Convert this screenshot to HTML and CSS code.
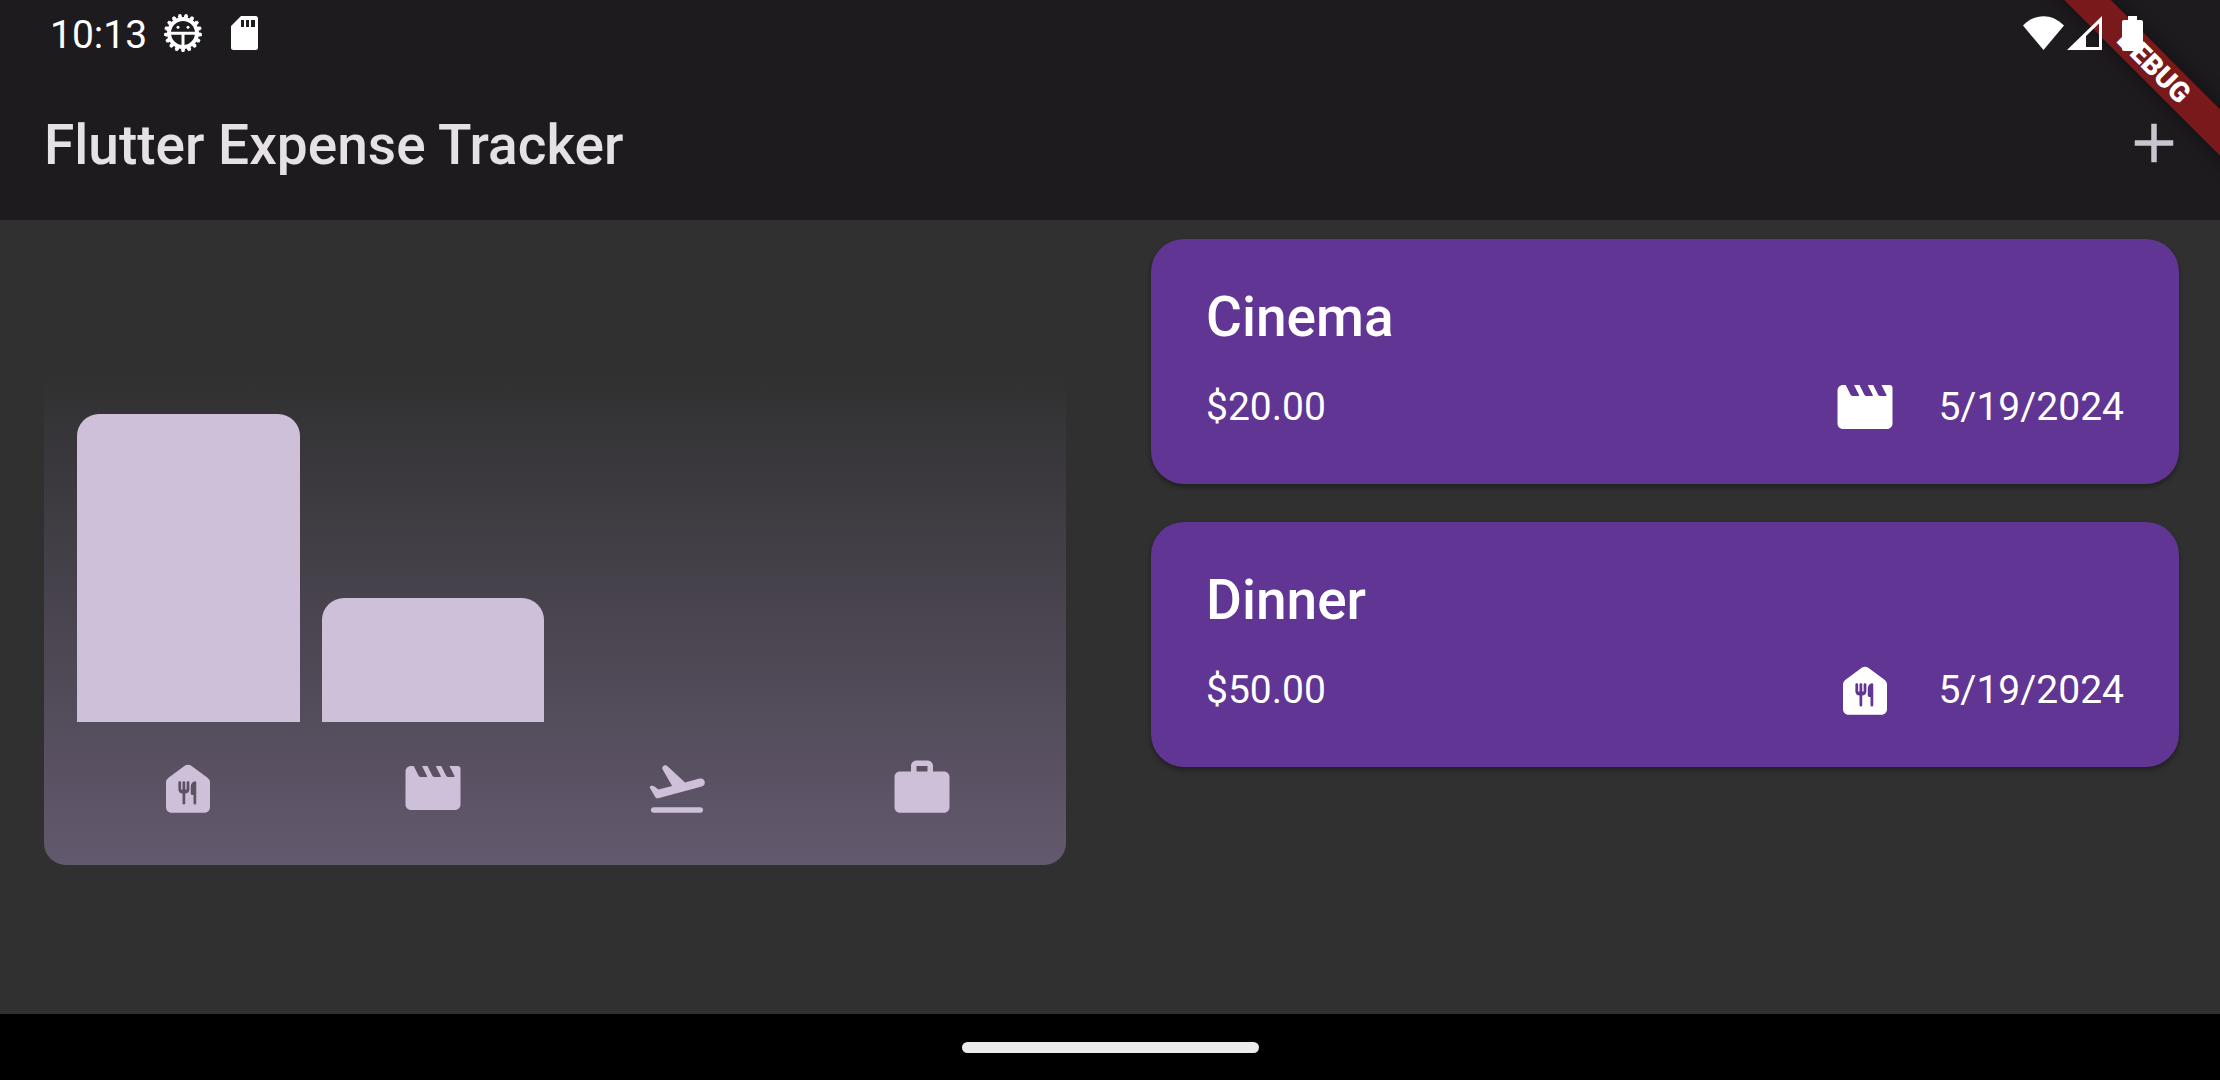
FILE: index.html
```html
<!DOCTYPE html>
<html lang="en">
<head>
  <meta charset="utf-8">
  <meta name="viewport" content="width=device-width, initial-scale=1">
  <title>Flutter Expense Tracker</title>
  <link rel="stylesheet" href="styles.css">
</head>
<body>
  <svg class="sprite" aria-hidden="true">
    <symbol id="food" viewBox="0 0 24 24">
      <path fill-rule="evenodd" d="M10.800 3.900c.71-.53 1.690-.53 2.400 0l6 4.500c.5.380.8.970.8 1.600v9c0 1.100-.9 2-2 2H6c-1.100 0-2-.9-2-2v-9c0-.630.300-1.220.8-1.600zM12.500 12.500V9.920a.42.420 0 0 0-.42-.42h-.16a.42.420 0 0 0-.42.420V12.500H11V9.920a.42.420 0 0 0-.42-.42h-.16a.42.420 0 0 0-.42.420V12.500h-.5V9.920a.42.420 0 0 0-.42-.42h-.16a.42.420 0 0 0-.42.420v2.580c0 .830.670 1.500 1.500 1.500v3.500a.5.500 0 0 0 1 0V14c.830 0 1.500-.67 1.500-1.500zM15 17.500V10c0-.33-.31-.57-.62-.47-.82.250-1.380 1.040-1.380 1.970v2.500c0 .280.220.5.500.5h.5v3a.5.500 0 0 0 1 0z"/>
    </symbol>
    <symbol id="movie" viewBox="0 0 24 24">
      <path d="M18 4l1.820 3.640c.08.160-.04.360-.22.360h-1.980c-.38 0-.73-.21-.89-.55L15 4h-2l1.820 3.640c.08.160-.04.360-.22.360h-1.980c-.38 0-.73-.21-.89-.55L10 4H8l1.820 3.640c.08.160-.04.360-.22.360H7.620c-.38 0-.73-.21-.9-.55L5 4H4c-1.100 0-1.990.9-1.990 2L2 18c0 1.100.9 2 2 2h16c1.100 0 2-.9 2-2V5c0-.55-.45-1-1-1h-3z"/>
    </symbol>
    <symbol id="travel" viewBox="0 0 24 24">
      <path d="M3.500 19h17c.55 0 1 .45 1 1s-.45 1-1 1h-17c-.55 0-1-.45-1-1s.45-1 1-1zM22.070 9.640c-.22-.8-1.040-1.270-1.840-1.060L14.920 10 8.460 3.980c-.27-.26-.66-.35-1.020-.25-.68.180-1 .960-.65 1.570l3.440 5.960-4.970 1.330-1.570-1.240c-.25-.19-.57-.26-.88-.18l-.33.090c-.32.080-.47.450-.3.730l1.880 3.250c.23.390.69.580 1.120.470L21 11.480c.8-.22 1.280-1.040 1.070-1.840z"/>
    </symbol>
    <symbol id="work" viewBox="0 0 24 24">
      <path d="M20 6h-4V4c0-1.110-.89-2-2-2h-4c-1.110 0-2 .89-2 2v2H4c-1.110 0-1.990.89-1.990 2L2 19c0 1.110.89 2 2 2h16c1.110 0 2-.89 2-2V8c0-1.110-.89-2-2-2zm-6 0h-4V4h4v2z"/>
    </symbol>
    <symbol id="plus" viewBox="0 0 24 24">
      <path d="M19 13h-6v6h-2v-6H5v-2h6V5h2v6h6v2z"/>
    </symbol>
  </svg>

  <div class="app">
    <header class="top">
      <div class="status">
        <span class="time">10:13</span>
        <svg class="gear" viewBox="0 0 38 38" aria-hidden="true">
          <g fill="none" stroke="#fff">
            <circle cx="19" cy="19" r="14" stroke-width="4"/>
            <circle cx="19" cy="19" r="16.600" stroke-width="2.400" pathLength="17" stroke-dasharray=".64 .36" transform="rotate(83.200 19 19)"/>
            <circle cx="19" cy="19" r="18" stroke-width="2" pathLength="17" stroke-dasharray=".42 .58" transform="rotate(85.600 19 19)"/>
            <path d="M6 19.300h26M19 20v13" stroke-width="3"/>
          </g>
          <circle cx="14" cy="13.300" r="1.500" fill="#fff"/>
          <circle cx="24" cy="13.300" r="1.500" fill="#fff"/>
        </svg>
        <svg class="sd" viewBox="0 0 27 34" aria-hidden="true">
          <path fill="#fff" fill-rule="evenodd" d="M10 0h14.500A2.500 2.500 0 0 1 27 2.500v29a2.500 2.500 0 0 1-2.500 2.500h-22A2.500 2.500 0 0 1 0 31.500V10zM10 4v7h3V4zM15 4v7h3V4zM20 4v7h4V4z"/>
        </svg>
        <span class="signals">
          <svg class="wifi" viewBox="0 0 41 34" aria-hidden="true"><path fill="#fff" d="M0 9.500C12-3 29-3 41 9.500L20.500 34z"/></svg>
          <svg class="cell" viewBox="0 0 35 34" aria-hidden="true"><path fill="#fff" fill-rule="evenodd" d="M35 0v34H0zM32 7.500L19 20v11h13z"/></svg>
          <svg class="battery" viewBox="0 0 21 35" aria-hidden="true"><path fill="#fff" d="M6 0h9v4h4a2 2 0 0 1 2 2v27a2 2 0 0 1-2 2H2a2 2 0 0 1-2-2V6a2 2 0 0 1 2-2h4z"/></svg>
        </span>
      </div>
      <div class="toolbar">
        <h1 class="title">Flutter Expense Tracker</h1>
        <button class="add" type="button" aria-label="Add expense"><svg class="icon"><use href="#plus"/></svg></button>
      </div>
      <div class="corner"><span class="ribbon">DEBUG</span></div>
    </header>

    <main class="content">
      <section class="half chart-side" aria-label="Expenses by category">
        <div class="chart">
          <div class="bars">
            <div class="slot"><div class="bar" style="height: 100%"></div></div>
            <div class="slot"><div class="bar" style="height: 40%"></div></div>
            <div class="slot"><div class="bar" style="height: 0%"></div></div>
            <div class="slot"><div class="bar" style="height: 0%"></div></div>
          </div>
          <div class="labels">
            <svg class="icon"><use href="#food"/></svg>
            <svg class="icon"><use href="#movie"/></svg>
            <svg class="icon"><use href="#travel"/></svg>
            <svg class="icon"><use href="#work"/></svg>
          </div>
        </div>
      </section>

      <section class="half list" aria-label="Expenses">
        <article class="card">
          <h2 class="name">Cinema</h2>
          <div class="details">
            <span>$20.00</span>
            <span class="when"><svg class="icon"><use href="#movie"/></svg><time datetime="2024-05-19">5/19/2024</time></span>
          </div>
        </article>
        <article class="card">
          <h2 class="name">Dinner</h2>
          <div class="details">
            <span>$50.00</span>
            <span class="when"><svg class="icon"><use href="#food"/></svg><time datetime="2024-05-19">5/19/2024</time></span>
          </div>
        </article>
      </section>
    </main>

    <footer class="nav"><span class="pill"></span></footer>
  </div>
</body>
</html>
```

FILE: styles.css
```css
* {
  box-sizing: border-box;
}

body {
  margin: 0;
  background: #303030;
  font-family: Roboto, "Noto Sans", sans-serif;
}

.sprite {
  position: absolute;
  width: 0;
  height: 0;
}

.icon {
  display: block;
  width: 66px;
  height: 66px;
  fill: currentColor;
}

.app {
  display: flex;
  flex-direction: column;
  min-height: 100vh;
}

/* Status bar and app bar */
.top {
  position: relative;
  background: #1d1b1e;
}

.status {
  position: relative;
  z-index: 2;
  display: flex;
  align-items: center;
  height: 66px;
  padding: 0 77px 0 50px;
  color: #fff;
  font-size: 39px;
  line-height: 44px;
}

.time {
  padding-top: 3px;
}

.gear {
  width: 38px;
  height: 38px;
  margin-left: 17px;
}

.sd {
  width: 27px;
  height: 34px;
  margin-left: 29px;
}

.signals {
  display: flex;
  align-items: center;
  margin-left: auto;
}

.wifi {
  width: 41px;
  height: 34px;
}

.cell {
  width: 35px;
  height: 34px;
  margin: 0 20px 0 3px;
}

.battery {
  width: 21px;
  height: 35px;
}

.toolbar {
  display: flex;
  align-items: center;
  justify-content: space-between;
  height: 154px;
  padding: 0 33px 0 44px;
}

.title {
  margin: 0;
  padding-top: 3px;
  color: #e6e1e5;
  font-size: 55px;
  font-weight: 500;
  line-height: 68px;
}

.add {
  padding: 0;
  border: 0;
  background: none;
  color: #cac4cf;
}

.corner {
  position: absolute;
  top: 0;
  right: 0;
  width: 220px;
  height: 220px;
  overflow: hidden;
  pointer-events: none;
}

.ribbon {
  position: absolute;
  top: 50px;
  right: -84px;
  width: 300px;
  height: 33px;
  background: #7a191b;
  box-shadow: 0 0 17px rgba(0, 0, 0, 0.5);
  color: #fff;
  font-size: 28px;
  font-weight: 900;
  line-height: 33px;
  text-align: center;
  transform: rotate(45deg);
}

/* Body */
.content {
  display: grid;
  flex: 1;
  grid-template-columns: 1fr 1fr;
}

.chart-side {
  display: flex;
  align-items: center;
  padding: 0 44px;
}

.chart {
  display: flex;
  flex: 1;
  flex-direction: column;
  gap: 33px;
  height: 495px;
  padding: 44px 22px;
  border-radius: 22px;
  background: linear-gradient(to top, #63596e, rgba(99, 89, 110, 0));
}

.bars,
.labels {
  display: grid;
  grid-template-columns: repeat(4, 1fr);
}

.bars {
  flex: 1;
}

.slot {
  display: flex;
  align-items: flex-end;
  padding: 0 11px;
}

.bar {
  flex: 1;
  border-radius: 22px 22px 0 0;
  background: #cfc0da;
}

.labels {
  justify-items: center;
  color: #cfc0da;
}

.list {
  display: flex;
  flex-direction: column;
  gap: 38px;
  padding: 19px 41px;
}

.card {
  display: flex;
  flex-direction: column;
  gap: 23px;
  padding: 44px 55px;
  border-radius: 33px;
  background: #603593;
  box-shadow: 0 3px 5px rgba(0, 0, 0, 0.35);
  color: #fff;
}

.name {
  margin: 0;
  font-size: 55px;
  font-weight: 500;
  line-height: 68px;
}

.details {
  display: flex;
  align-items: center;
  justify-content: space-between;
  font-size: 39px;
  line-height: 66px;
}

.when {
  display: flex;
  gap: 40px;
}

/* Gesture navigation */
.nav {
  display: flex;
  align-items: center;
  justify-content: center;
  height: 66px;
  background: #000;
}

.pill {
  width: 297px;
  height: 11px;
  border-radius: 6px;
  background: #ebebeb;
}
```
